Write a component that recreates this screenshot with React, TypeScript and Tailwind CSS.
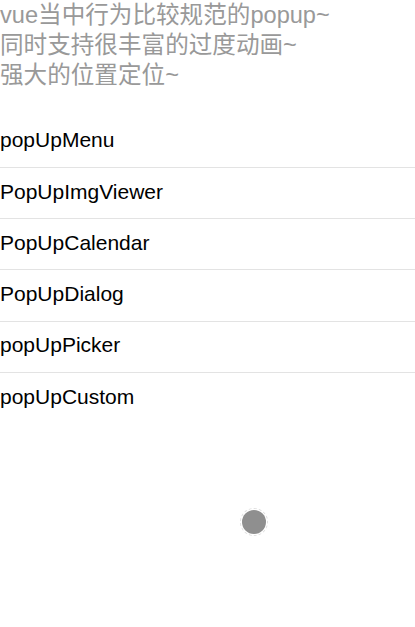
import React from "react";

const items = ["popUpMenu", "PopUpImgViewer", "PopUpCalendar", "PopUpDialog", "popUpPicker", "popUpCustom"];

export default function App() {
  return (
    <div className="relative w-[415px] h-[627px] bg-white overflow-hidden" style={{ fontFamily: '"Liberation Sans", Arial, "Noto Sans CJK SC", sans-serif' }}>
      <div className="text-[23.6px] leading-[30px] text-[#999999] pt-0">
        <div>vue当中行为比较规范的popup~</div>
        <div>同时支持很丰富的过度动画~</div>
        <div>强大的位置定位~</div>
      </div>
      <div className="mt-[26.5px]">
        {items.map((t, i) => (
          <div
            key={t}
            className={`h-[51.25px] flex items-center pb-[3px] text-[21px] text-black ${i < items.length - 1 ? "border-b border-[#e3e3e3]" : ""}`}
          >
            <span>{t}</span>
          </div>
        ))}
      </div>
      <div className="absolute left-[240px] top-[508px] w-[28px] h-[28px] rounded-full border border-dashed border-[#e0e0e0] flex items-center justify-center">
        <div className="w-[24px] h-[24px] rounded-full bg-[#8f8f8f]" />
      </div>
    </div>
  );
}
